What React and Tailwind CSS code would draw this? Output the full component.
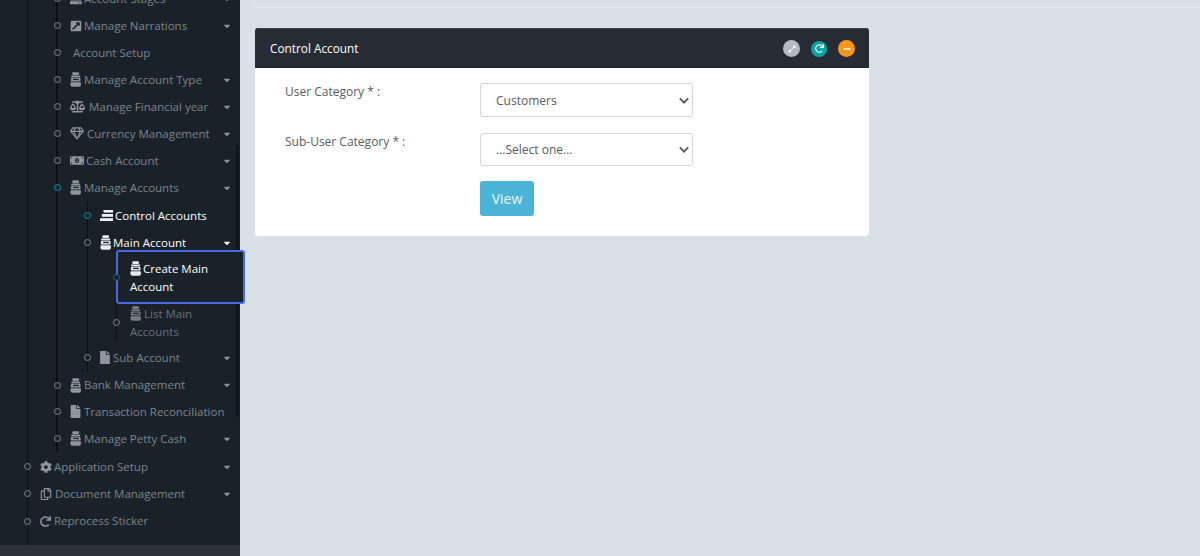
import React from "react";
import { FaExternalLinkSquareAlt, FaBalanceScale, FaRegGem, FaMoneyBillAlt, FaFile, FaCog, FaRegCopy, FaRedo, FaExpandAlt, FaMinus, FaCaretDown, FaServer } from "react-icons/fa";

function Bank({ className = "" }) {
  return (
    <svg viewBox="0 0 12 16" className={className} fill="currentColor">
      <path d="M3 0h6.4l.5 1.5-.6 1.5H3l-.6-1.5z" />
      <path d="M1.8 3.7h8.8c.4 0 .6.3.6.7s-.2.8-.6.8H1.8c-.4 0-.6-.4-.6-.8s.2-.7.6-.7z" />
      <path fillRule="evenodd" d="M2.6 5.9h7.3c.9 0 1.6.7 1.6 1.6v1.6c0 .5-.2.9-.5 1.2H1.5c-.4-.3-.6-.7-.6-1.2V7.5c0-.9.8-1.6 1.7-1.6zM4 7.2c-.5 0-.8.3-.8.7s.3.7.8.7h4.4v.6h1V7.2z" />
      <path d="M1.5 11h9.4c.6 0 1 .5 1 1v1.8c0 1.2-.9 2.2-2.1 2.2H2.6c-1.2 0-2.1-1-2.1-2.2V12c0-.5.4-1 1-1z" />
    </svg>
  );
}

function Stack({ className = "" }) {
  return (
    <svg viewBox="0 0 13 11" className={className} fill="currentColor">
      <path d="M3.5 0H13v2.6H3.5z" />
      <path d="M1.8 4H13v2.8H1.8z" />
      <path d="M0 8.2h13V11H0z" />
    </svg>
  );
}

function Row({ icon, label, caret, tone = "text-[#7d858c]", dot = "border-[#7f878e]", gap = "gap-[3px]", h = "h-[27px]", pl = "pl-[12px]" }) {
  return (
    <div className={`relative flex items-center pr-[8px] ${pl} ${h} ${tone}`}>
      <span className={`absolute left-[-4px] top-1/2 -mt-[3.5px] w-[7px] h-[7px] rounded-full border-[1.5px] bg-[#1a2229] ${dot}`} />
      <span className={`flex items-center min-w-0 flex-1 whitespace-nowrap ${gap}`}>
        {icon}
        <span>{label}</span>
      </span>
      {caret && <FaCaretDown className={`w-[10px] h-[10px] shrink-0 ${tone === "text-white" ? "text-white" : "text-[#8d949a]"}`} />}
    </div>
  );
}

const ic = "w-[11px] h-[15px] shrink-0 text-[#8f969c]";
const icWhite = "w-[11px] h-[15px] shrink-0 text-[#e8eaec]";
const sq = "w-[12px] h-[12px] shrink-0 text-[#8f969c]";

export default function App() {
  return (
    <div className="flex h-[556px] w-[1200px] overflow-hidden bg-[#dae0e8] font-['Open_Sans',sans-serif] text-[12px]">
      <aside className="relative flex flex-col w-[240px] h-[556px] shrink-0 bg-[#1a2229] text-[11.5px]">
        <nav className="-mt-[15px] h-[560px] shrink-0">
          <ul className="ml-[27px] h-full border-l border-[#0c1115]">
            <li className="pb-px">
              <ul className="ml-[28px] border-l-2 border-[#0c1115]">
                <Li icon={<FaServer className={sq} />} label="Account Stages" caret gap="gap-[2px]" />
                <Li icon={<FaExternalLinkSquareAlt className={sq} />} label="Manage Narrations" caret gap="gap-[2px]" />
                <Li icon={<span className="w-0" />} label="Account Setup" gap="gap-[3px]" />
                <Li icon={<Bank className={ic} />} label="Manage Account Type" caret />
                <Li icon={<FaBalanceScale className="w-[15px] h-[13px] shrink-0 text-[#8f969c]" />} label="Manage Financial year" caret gap="gap-[4px]" />
                <Li icon={<FaRegGem className="w-[14px] h-[13px] shrink-0 text-[#8f969c]" />} label="Currency Management" caret gap="gap-[3px]" />
                <Li icon={<FaMoneyBillAlt className="w-[14px] h-[13px] shrink-0 text-[#8f969c]" />} label="Cash Account" caret gap="gap-[2px]" />
                <li>
                  <Row icon={<Bank className={ic} />} label="Manage Accounts" caret dot="border-[#0d9aa0]" />
                  <ul className="ml-[29px] border-l border-[#0c1115]">
                    <li className="pt-px">
                      <Row icon={<Stack className="w-[13px] h-[11px] shrink-0 text-[#f0f1f2]" />} label="Control Accounts" tone="text-white" dot="border-[#0d9aa0]" gap="gap-[2px]" />
                    </li>
                    <li>
                      <Row icon={<Bank className={icWhite} />} label="Main Account" caret tone="text-white" gap="gap-[2px]" />
                      <ul className="ml-[28px] border-l border-[#0c1115]">
                        <li>
                          <div className="relative z-10 -ml-[1px] -mr-[5px] -mt-[6px] h-[54px] rounded-[3px] border-2 border-[#4a6ae6] bg-[#1a2229] pl-[12px] pt-[8px] pr-[20px] leading-[18px] text-white">
                            <span className="absolute left-[-5px] top-1/2 -mt-[3.5px] w-[7px] h-[7px] rounded-full border-[1.5px] border-[#3c5a8a] bg-[#1a2229]" />
                            <Bank className={`${icWhite} inline-block align-[-3px] mr-[2px]`} />
                            Create Main Account
                          </div>
                        </li>
                        <li>
                          <div className="relative h-[37px] pl-[13px] pt-[1px] pr-[20px] leading-[18px] text-[#6b7279]">
                            <span className="absolute left-[-4px] top-1/2 -mt-[3.5px] w-[7px] h-[7px] rounded-full border-[1.5px] border-[#7f878e] bg-[#1a2229]" />
                            <Bank className="w-[11px] h-[15px] shrink-0 text-[#757c82] inline-block align-[-3px] mr-[3px]" />
                            List Main Accounts
                          </div>
                        </li>
                      </ul>
                    </li>
                    <li className="pt-[3px] pb-px">
                      <Row icon={<FaFile className="w-[10px] h-[13px] shrink-0 text-[#8f969c]" />} label="Sub Account" caret gap="gap-[3px]" />
                    </li>
                  </ul>
                </li>
                <Li icon={<Bank className={ic} />} label="Bank Management" caret h="h-[26px]" />
                <Li icon={<FaFile className="w-[11px] h-[13px] shrink-0 text-[#8f969c]" />} label="Transaction Reconciliation" gap="gap-[3px]" />
                <Li icon={<Bank className={ic} />} label="Manage Petty Cash" caret />
              </ul>
            </li>
            <Li icon={<FaCog className={sq} />} label="Application Setup" caret gap="gap-[2px]" />
            <Li icon={<FaRegCopy className={sq} />} label="Document Management" caret gap="gap-[3px]" />
            <Li icon={<FaRedo className="w-[11px] h-[11px] shrink-0 text-[#8f969c]" />} label="Reprocess Sticker" h="h-[28px]" gap="gap-[3px]" />
          </ul>
        </nav>
        <footer className="h-[11px] shrink-0 bg-[#2b3239]" />
        <div className="absolute right-[1px] top-[145px] h-[272px] w-[3px] bg-[#10161b]" />
      </aside>

      <main className="flex-1 pl-[15px] pr-[331px]">
        <div className="h-[8px] border-b border-[#e9edf1] -mr-[331px]" />
        <section className="mt-[20px] rounded-[3px] bg-white text-[#555c63] overflow-hidden">
          <header className="flex items-center justify-between h-[40px] pl-[15px] pr-[14px] bg-[#272b33] border-t border-[#3d424a] text-white">
            <span className="font-medium text-[11.8px]">Control Account</span>
            <span className="flex items-center gap-[11px]">
              <span className="flex items-center justify-center w-[17px] h-[17px] rounded-full bg-[#b0bac1] text-white"><FaExpandAlt className="w-[8px] h-[8px]" /></span>
              <span className="flex items-center justify-center w-[16px] h-[16px] rounded-full bg-[#03a5a5] text-white"><FaRedo className="w-[9px] h-[9px]" /></span>
              <span className="flex items-center justify-center w-[17px] h-[17px] rounded-full bg-[#f7981d] text-white"><FaMinus className="w-[8px] h-[8px]" /></span>
            </span>
          </header>
          <div className="pl-[30px] pt-[15px] pb-[20px]">
            <div className="flex h-[50px]">
              <label className="w-[195px] leading-[18px]">User Category * :</label>
              <Select value="Customers" h="h-[34px]" pt="pt-[1px]" />
            </div>
            <div className="flex h-[48px]">
              <label className="w-[195px] leading-[18px]">Sub-User Category * :</label>
              <Select value="...Select one..." h="h-[33px]" pt="" />
            </div>
            <button className="ml-[195px] block w-[54px] h-[35px] rounded-[3px] bg-[#4ab5d6] text-[#eef8fb] text-[14px]">View</button>
          </div>
        </section>
      </main>
    </div>
  );
}

function Li(props) {
  return (
    <li>
      <Row {...props} />
    </li>
  );
}

function Select({ value, h, pt }) {
  return (
    <div className={`flex items-center justify-between w-[213px] ${h} rounded-[3px] border border-[#d3d6da] pl-[15px] pr-[3px] text-[12px] text-[#555c63]`}>
      <span className={pt}>{value}</span>
      <svg viewBox="0 0 12 8" className="w-[10px] h-[7px]" fill="none" stroke="#55595e" strokeWidth="2.2"><path d="M1 1.5l5 5 5-5" /></svg>
    </div>
  );
}
